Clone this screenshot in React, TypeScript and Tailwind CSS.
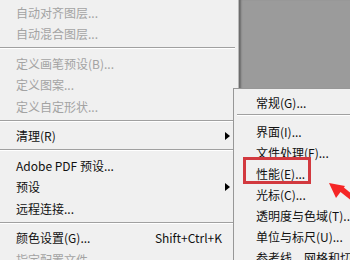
import React from "react";

type Item =
  | { type: "sep" }
  | { type: "item"; label: string; disabled?: boolean; sub?: boolean; shortcut?: string };

const leftItems: Item[] = [
  { type: "item", label: "自动对齐图层...", disabled: true },
  { type: "item", label: "自动混合图层...", disabled: true },
  { type: "sep" },
  { type: "item", label: "定义画笔预设(B)...", disabled: true },
  { type: "item", label: "定义图案...", disabled: true },
  { type: "item", label: "定义自定形状...", disabled: true },
  { type: "sep" },
  { type: "item", label: "清理(R)", sub: true },
  { type: "sep" },
  { type: "item", label: "Adobe PDF 预设..." },
  { type: "item", label: "预设", sub: true },
  { type: "item", label: "远程连接..." },
  { type: "sep" },
  { type: "item", label: "颜色设置(G)...", shortcut: "Shift+Ctrl+K" },
  { type: "item", label: "指定配置文件...", disabled: true },
];

const subItems: Item[] = [
  { type: "item", label: "常规(G)..." },
  { type: "sep" },
  { type: "item", label: "界面(I)..." },
  { type: "item", label: "文件处理(F)..." },
  { type: "item", label: "性能(E)..." },
  { type: "item", label: "光标(C)..." },
  { type: "item", label: "透明度与色域(T)..." },
  { type: "item", label: "单位与标尺(U)..." },
  { type: "item", label: "参考线、网格和切片(S)..." },
];

function Arrow() {
  return (
    <svg width="5" height="8" viewBox="0 0 5 8" className="block">
      <polygon points="0,0 5,4 0,8" fill="#000" />
    </svg>
  );
}

export default function App() {
  return (
    <div className="relative w-[350px] h-[260px] overflow-hidden bg-[#f0f0f0] flex font-['Noto_Sans_CJK_SC','Noto_Sans',sans-serif] text-[12px]">
      {/* Left menu */}
      <div className="w-[239px] shrink-0 pt-[2px] bg-[#f0f0f0] border-r border-[#b8b8b8]">
        {leftItems.map((it, i) =>
          it.type === "sep" ? (
            <div key={i} className="h-[8px] pt-[2px]">
              <div className="h-px bg-[#a0a0a0] mr-[3px]" />
              <div className="h-px bg-white mr-[3px]" />
            </div>
          ) : (
            <div
              key={i}
              className={`h-[21.5px] flex items-center pl-[16px] pr-[8px] whitespace-nowrap ${
                it.disabled ? "text-[#a3a3a3]" : "text-[#111]"
              }`}
            >
              <span className="flex-1">{it.label}</span>
              {it.shortcut && <span className="mr-[8px]">{it.shortcut}</span>}
              {it.sub && <Arrow />}
            </div>
          )
        )}
      </div>
      {/* Canvas area */}
      <div className="flex-1 bg-[#9b9b9b] shadow-[inset_3px_0_2px_-1px_#6a6a6a]" />

      {/* Submenu */}
      <div className="absolute left-[233px] top-[88px] w-[140px] h-[190px] bg-[#f0f0f0] border border-[#979797] pt-[3px]">
        {subItems.map((it, i) =>
          it.type === "sep" ? (
            <div key={i} className="h-[8px] pt-[1px] pl-[3px]">
              <div className="h-px bg-[#a0a0a0]" />
              <div className="h-px bg-white" />
            </div>
          ) : (
            <div key={i} className="h-[21px] flex items-center pl-[22px] whitespace-nowrap text-[#111]">
              {it.label}
            </div>
          )
        )}
      </div>

      {/* Red highlight box */}
      <div className="absolute left-[243px] top-[157px] w-[68px] h-[27px] border-[3px] border-[#d2393f]" />

      {/* Red arrow */}
      <svg className="absolute left-0 top-0" width="350" height="260" viewBox="0 0 350 260">
        <polygon points="329,183 345,186 336,198" fill="#f52626" />
        <polygon points="338,190 342,186 362,202 358,206" fill="#f52626" />
      </svg>
    </div>
  );
}
